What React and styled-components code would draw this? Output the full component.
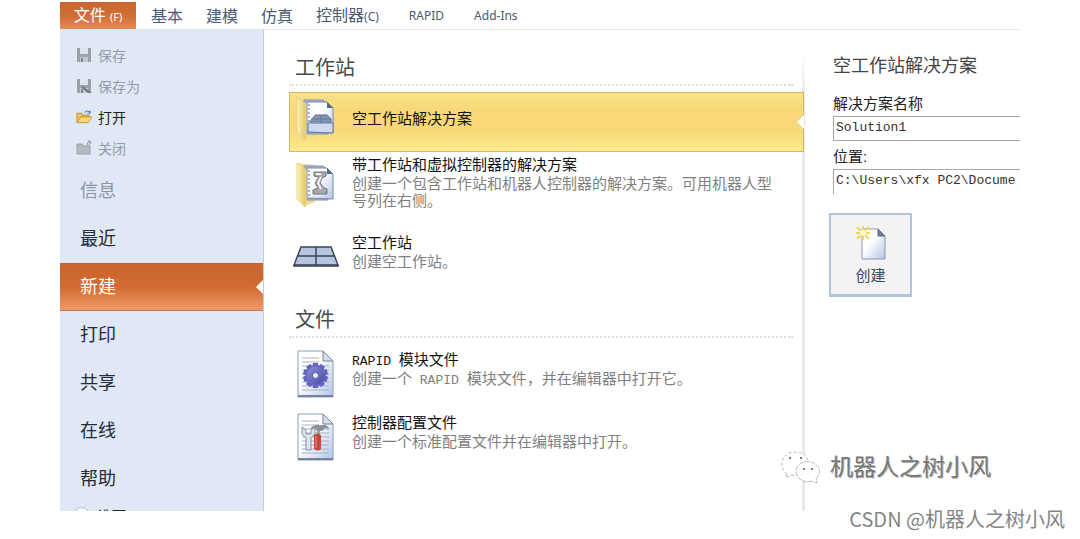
import React, { Component } from "react";
import styled, { createGlobalStyle } from "styled-components";

const GlobalStyle = createGlobalStyle`
  * {
    box-sizing: border-box;
  }
  body {
    margin: 0;
    background: #fff;
    font-family: "Liberation Sans", "Noto Sans CJK SC", sans-serif;
  }
  button {
    border: 0;
    padding: 0;
    background: none;
    font-family: inherit;
    text-align: left;
  }
`;

const Page = styled.div`
  position: relative;
  height: 100vh;
  padding: 0 60px 28px;
`;
const Window = styled.div`
  display: flex;
  flex-direction: column;
  height: 100%;
  overflow: hidden;
`;

/* ribbon */
const Ribbon = styled.nav`
  display: flex;
  flex: none;
  height: 30px;
  padding-top: 2px;
  border-bottom: 1px solid #dce8f4;
  font-family: "Noto Sans", "Noto Sans CJK SC", sans-serif;
`;
const FileTab = styled.button`
  width: 76px;
  margin-right: 15px;
  background: linear-gradient(#cb6530, #d06c35 50%, #e58b58);
  color: #fff;
  font-size: 16px;
  line-height: 26px;
  text-align: center;
  small {
    font-size: 11px;
  }
`;
const Tab = styled.button`
  margin-right: ${props => (props.$wide ? "30px" : "23px")};
  color: #4b5b73;
  font-size: ${props => (props.$latin ? "12px" : "16px")};
  line-height: 26px;
  white-space: nowrap;
  small {
    font-size: 12px;
  }
`;

const Body = styled.div`
  display: flex;
  flex: 1;
  min-height: 0;
`;

/* backstage menu */
const Sidebar = styled.aside`
  flex: none;
  width: 204px;
  padding-top: 9px;
  overflow: hidden;
  background: #e0e8f6;
  border-right: 1px solid #c0cce0;
`;
const Commands = styled.div`
  margin-bottom: 4px;
`;
const Command = styled.button`
  display: flex;
  align-items: center;
  gap: 6px;
  width: 100%;
  height: ${props => (props.$last ? "24px" : "31px")};
  padding-left: 16px;
  color: ${props => (props.disabled ? "#949ba8" : "#222")};
  font-size: 14px;
`;
const MenuItem = styled.button`
  position: relative;
  display: block;
  width: 100%;
  height: 48px;
  padding-left: 20px;
  font-size: 18px;
  line-height: 48px;
  color: ${props => (props.disabled ? "#8d96a6" : "#222b38")};
  ${props =>
    props.$active &&
    `
    color: #fff;
    background: linear-gradient(#cb6530, #d16b33 50%, #ee9863 96%);
    border-top: 1px solid #b5653d;
    border-bottom: 1px solid #c07a55;
    line-height: 46px;
  `}
`;
const Notch = styled.span`
  position: absolute;
  top: 50%;
  right: 0;
  margin-top: -7px;
  border: 7px solid transparent;
  border-left: 0;
  border-right-color: #fff;
`;

/* template list */
const Templates = styled.main`
  flex: 1;
  min-width: 0;
  padding: 24px 1px 0 25px;
  background: linear-gradient(transparent 24px, #e9e9e9 64px) right / 3px 100%
    no-repeat;
`;
const SectionTitle = styled.h2`
  margin: 0 11px ${props => (props.$gap ? "10px" : "6px")} 0;
  padding: 0 0 2px 6px;
  border-bottom: 2px dotted #dedede;
  color: #4a4a4a;
  font-size: 20px;
  font-weight: normal;
  line-height: 28px;
`;
const Row = styled.button`
  position: relative;
  display: flex;
  align-items: ${props => props.$align || "center"};
  gap: 12px;
  width: 100%;
  padding: ${props => props.$pad || "0"};
  ${props =>
    props.$active &&
    `
    height: 60px;
    background: linear-gradient(#fbe38a, #f8d878 30%, #f8d878 65%, #fdec8c);
    box-shadow: inset 0 0 0 1px #d3b768;
  `}
`;
const RowText = styled.span`
  flex: 1;
  padding-right: 20px;
`;
const RowTitle = styled.span`
  display: block;
  color: #111;
  font-size: 15px;
  line-height: 20px;
`;
const RowNote = styled.span`
  display: block;
  color: #808080;
  font-size: 15px;
  line-height: 17px;
`;
const Mono = styled.span`
  font-family: "Liberation Mono", monospace;
  font-size: 13px;
  line-height: 1;
  white-space: pre;
`;
const Stations = styled.section``;
const Files = styled.section`
  margin-top: 26px;
`;

/* details */
const Details = styled.form`
  display: flex;
  flex-direction: column;
  flex: none;
  width: 215px;
  padding: 24px 0 0 28px;
`;
const DetailsTitle = styled.h2`
  margin: 0 0 14px;
  color: #444;
  font-size: 18px;
  font-weight: normal;
  line-height: 24px;
`;
const Label = styled.label`
  color: #222;
  font-size: 15px;
  line-height: 24px;
`;
const TextBox = styled.input`
  height: 25px;
  margin-bottom: 4px;
  padding: 0 0 3px 2px;
  border: 1px solid #a8a8a8;
  border-right: 0;
  border-radius: 0;
  border-bottom-width: ${props => (props.$cut ? "0" : "1px")};
  outline: 0;
  color: #333;
  font-family: "Liberation Mono", monospace;
  font-size: 13px;
`;
const CreateButton = styled.button`
  display: flex;
  flex-direction: column;
  align-items: center;
  align-self: flex-start;
  gap: 4px;
  width: 83px;
  height: 84px;
  margin: 15px 0 0 -4px;
  padding-top: 9px;
  background: #f3f3f3;
  border: 2px solid #b0c3dc;
  border-bottom-width: 3px;
  color: #3d4a5e;
  font-size: 15px;
  line-height: 20px;
`;

/* marks laid over the page */
const Watermark = styled.div`
  position: absolute;
  right: 89px;
  bottom: 54px;
  display: flex;
  align-items: center;
  gap: 10px;
  color: #777;
  font-size: 23px;
  line-height: 36px;
  text-shadow: -1px -1px 0 #fff, 1px 1px 0 #aaa;
`;
const Credit = styled.div`
  position: absolute;
  right: 15px;
  bottom: 6px;
  color: #858585;
  font-family: "Noto Sans CJK SC", sans-serif;
  font-size: 20px;
  line-height: 28px;
`;

const SaveIcon = ({ pen }) => (
  <svg width="16" height="16" viewBox="0 0 16 16">
    <path d="M1 1h14v14H1z" fill="#9aa1ab" />
    <path d="M4 1h8v6H4z" fill="#dfe3ea" />
    <path d="M4 10h8v5H4z" fill="#c3c8d0" />
    <path d="M5 11h2v4H5z" fill="#7c838e" />
    {pen && <path d="M7 8l6 5 3 2-4 0-6-5z" fill="#6f7783" />}
  </svg>
);
const OpenIcon = () => (
  <svg width="16" height="16" viewBox="0 0 17 16">
    <path d="M1 14V4h5l1 2h7v3" fill="#e9c15c" stroke="#b98d35" />
    <path d="M1 14l4-6h12l-4 6z" fill="#fbd875" stroke="#c3953b" />
    <path d="M9 3q3-3 6 0m0-2v3h-3" fill="none" stroke="#4a6f9f" />
  </svg>
);
const CloseIcon = () => (
  <svg width="16" height="16" viewBox="0 0 16 16">
    <path d="M1 14V4h5l1 2h7v8z" fill="#b5bac3" stroke="#989ea9" />
    <path d="M11 5q0-3 3-3m-2-2l3 2-2 3" fill="none" stroke="#8b929e" />
  </svg>
);
const OptionsIcon = () => (
  <svg width="16" height="16" viewBox="0 0 16 16">
    <path d="M1 1h8l3 3v11H1z" fill="#fff" stroke="#b9bfc9" />
  </svg>
);

const Gradients = () => (
  <defs>
    <linearGradient id="folder" x1="0" x2="1">
      <stop offset="0" stopColor="#fdf3b4" />
      <stop offset="1" stopColor="#e2c564" />
    </linearGradient>
    <linearGradient id="sheet" x1="0" y1="0" x2="1" y2="1">
      <stop offset="0.4" stopColor="#fff" />
      <stop offset="1" stopColor="#b3c5e8" />
    </linearGradient>
    <linearGradient id="gear" x1="0" y1="0" x2="1" y2="1">
      <stop offset="0" stopColor="#8f91e0" />
      <stop offset="1" stopColor="#4a489f" />
    </linearGradient>
  </defs>
);
const FolderIcon = ({ robot }) => (
  <svg width="48" height="48" viewBox="0 0 48 48">
    <Gradients />
    <path d="M5 2l18 2v37l-10 4z" fill="#f1dc8c" />
    <path d="M12 5h19l5 4v30H12z" fill="#a9b8d0" stroke="#8492aa" />
    <path d="M15 7h20l6 6v25l-26-1z" fill="url(#sheet)" stroke="#7286ab" />
    <path d="M35 7v6h6z" fill="#52698d" />
    <path d="M17 9v27" stroke="#5a6679" strokeDasharray="2 2" />
    {robot ? (
      <g>
        <path
          d="M22 11h12v4l-4 2-2 5 4 5 3 1v5H21v-4l5-2-3-5 4-6-5-1z"
          fill="#a6a8ab"
          stroke="#6f7276"
        />
        <path
          d="M24 13h5M29 16l-3 6 3 6"
          fill="none"
          stroke="#f2f2f2"
          strokeWidth="2"
        />
      </g>
    ) : (
      <g stroke="#65779c">
        <path d="M20 24l3-4h12l4 4v3H18z" fill="#8496b5" />
        <path d="M16 28h25v10l-25-1z" fill="#ced9f2" />
        <path d="M29 20v8M19 24h20" fill="none" />
      </g>
    )}
    <path d="M5 2l9 7v34l-1 3-8-8z" fill="url(#folder)" stroke="#e8d58c" />
  </svg>
);
const FloorIcon = () => (
  <svg width="48" height="48" viewBox="0 0 48 48">
    <path
      d="M9 25h30l7 18H2z"
      fill="#b5c4df"
      stroke="#384150"
      strokeWidth="1.4"
    />
    <path d="M1 44h46M24 25v18M6 34h37" stroke="#384150" strokeWidth="1.4" />
  </svg>
);
const PaperIcon = ({ children }) => (
  <svg width="48" height="48" viewBox="0 0 48 48">
    <Gradients />
    <path d="M6 1h25l10 10v36H6z" fill="url(#sheet)" stroke="#8e9db7" />
    <path d="M31 1v10h10z" fill="#d5deec" stroke="#7587a4" />
    <path
      d="M10 8h17M10 12h17M10 16h27M10 20h27M10 24h27M10 28h27M10 32h27M10 36h27M10 40h27"
      stroke="#a6b0c2"
    />
    <path d="M6 46h35" stroke="#74849f" strokeWidth="2" />
    {children}
  </svg>
);
const TEETH = [0, 36, 72, 108, 144, 180, 216, 252, 288, 324];
const RapidIcon = () => (
  <PaperIcon>
    <g fill="#6462bd">
      {TEETH.map(angle => (
        <path
          key={angle}
          d="M21 13h5l1 5h-7z"
          transform={`rotate(${angle} 23.5 25.5)`}
        />
      ))}
      <circle cx="23.5" cy="25.5" r="9" fill="url(#gear)" />
    </g>
    <circle cx="23.5" cy="25.5" r="3" fill="#eef0fa" stroke="#5653a8" />
  </PaperIcon>
);
const ConfigIcon = () => (
  <PaperIcon>
    <path
      d="M10 14v7l4 4v12h5V25l4-4v-7l-4 3v4h-5v-4z"
      fill="#dfe4ea"
      stroke="#848e9c"
    />
    <path d="M18 16q4-5 9-4h7l4 4-5-1-3 3h-5l-2-3z" fill="#8b949c" />
    <path d="M25 18h3v5h-3z" fill="#9aa3ab" />
    <path d="M22 22q4-3 7 0v14q-3 3-7 0z" fill="#c9443a" />
    <path d="M24 23v12" stroke="#ee9387" />
  </PaperIcon>
);
const NewIcon = () => (
  <svg width="34" height="38" viewBox="0 0 34 38">
    <Gradients />
    <path d="M8 5h16l7 7v23H8z" fill="url(#sheet)" stroke="#8997ad" />
    <path d="M24 5v7h7z" fill="#6c7e99" stroke="#596b86" />
    <path
      d="M9 2v14M2 9h14M3 3l12 12M15 3L3 15"
      stroke="#f0d75b"
      strokeWidth="2"
    />
    <circle cx="9" cy="9" r="3" fill="#fffbd5" />
  </svg>
);
const ChatIcon = () => (
  <svg width="40" height="36" viewBox="0 0 40 36" fill="#fff" stroke="#bbb">
    <path
      d="M7 25l-1 4 5-3q4 1 7 0M7 25C-2 18 1 4 14 3q12 0 14 9"
      strokeDasharray="3 2"
    />
    <path
      d="M36 30q8-8-1-15-8-5-15 0-8 7 0 15 6 4 12 2l5 2z"
      strokeDasharray="5 1"
    />
    <path d="M9 9h2M20 9h2M23 20h2M31 20h2" stroke="#777" strokeWidth="2" />
  </svg>
);

const menu = ["信息", "最近", "新建", "打印", "共享", "在线", "帮助"];

class App extends Component {
  state = {
    page: "新建",
    name: "Solution1",
    location: "C:\\Users\\xfx PC2\\Docume"
  };
  openPage = page => this.setState({ page });
  handleName = event => this.setState({ name: event.target.value });
  handleLocation = event => this.setState({ location: event.target.value });
  render() {
    const { page, name, location } = this.state;
    return (
      <Page>
        <GlobalStyle />
        <Window>
          <Ribbon>
            <FileTab>
              文件 <small>(F)</small>
            </FileTab>
            <Tab>基本</Tab>
            <Tab>建模</Tab>
            <Tab>仿真</Tab>
            <Tab $wide>
              控制器<small>(C)</small>
            </Tab>
            <Tab $latin $wide>
              RAPID
            </Tab>
            <Tab $latin>Add-Ins</Tab>
          </Ribbon>
          <Body>
            <Sidebar>
              <Commands>
                <Command disabled>
                  <SaveIcon />
                  保存
                </Command>
                <Command disabled>
                  <SaveIcon pen />
                  保存为
                </Command>
                <Command>
                  <OpenIcon />
                  打开
                </Command>
                <Command disabled>
                  <CloseIcon />
                  关闭
                </Command>
              </Commands>
              {menu.map(item => (
                <MenuItem
                  key={item}
                  disabled={item === "信息"}
                  $active={item === page}
                  onClick={() => this.openPage(item)}
                >
                  {item}
                  {item === page && <Notch />}
                </MenuItem>
              ))}
              <Command $last>
                <OptionsIcon />
                选项
              </Command>
            </Sidebar>
            <Templates>
              <Stations>
                <SectionTitle>工作站</SectionTitle>
                <Row $active $pad="0 0 6px 3px">
                  <FolderIcon />
                  <RowText>
                    <RowTitle>空工作站解决方案</RowTitle>
                  </RowText>
                  <Notch />
                </Row>
                <Row $align="flex-end" $pad="3px 0 10px 3px">
                  <FolderIcon robot />
                  <RowText>
                    <RowTitle>带工作站和虚拟控制器的解决方案</RowTitle>
                    <RowNote>
                      创建一个包含工作站和机器人控制器的解决方案。可用机器人型号列在右侧。
                    </RowNote>
                  </RowText>
                </Row>
                <Row $align="flex-end" $pad="3px 0 10px 3px">
                  <FloorIcon />
                  <RowText>
                    <RowTitle>空工作站</RowTitle>
                    <RowNote>创建空工作站。</RowNote>
                  </RowText>
                </Row>
              </Stations>
              <Files>
                <SectionTitle $gap>文件</SectionTitle>
                <Row $align="flex-start" $pad="2px 0 13px 3px">
                  <RapidIcon />
                  <RowText>
                    <RowTitle>
                      <Mono>RAPID </Mono>模块文件
                    </RowTitle>
                    <RowNote>
                      创建一个<Mono> RAPID </Mono>模块文件，并在编辑器中打开它。
                    </RowNote>
                  </RowText>
                </Row>
                <Row $align="flex-start" $pad="2px 0 13px 3px">
                  <ConfigIcon />
                  <RowText>
                    <RowTitle>控制器配置文件</RowTitle>
                    <RowNote>创建一个标准配置文件并在编辑器中打开。</RowNote>
                  </RowText>
                </Row>
              </Files>
            </Templates>
            <Details onSubmit={event => event.preventDefault()}>
              <DetailsTitle>空工作站解决方案</DetailsTitle>
              <Label htmlFor="name">解决方案名称</Label>
              <TextBox id="name" value={name} onChange={this.handleName} />
              <Label htmlFor="location">位置:</Label>
              <TextBox
                id="location"
                $cut
                value={location}
                onChange={this.handleLocation}
              />
              <CreateButton type="submit">
                <NewIcon />
                创建
              </CreateButton>
            </Details>
          </Body>
        </Window>
        <Watermark>
          <ChatIcon />
          机器人之树小风
        </Watermark>
        <Credit>CSDN @机器人之树小风</Credit>
      </Page>
    );
  }
}

export default App;
